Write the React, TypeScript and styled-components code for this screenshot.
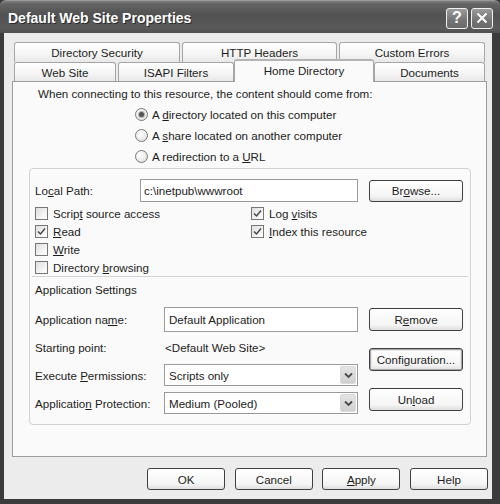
import React from "react";
import styled, { createGlobalStyle } from "styled-components";

const Global = createGlobalStyle`
  html, body { margin: 0; padding: 0; background: #3b3b3b; }
  body {
    font-family: "Liberation Sans", Arial, sans-serif;
    font-size: 11.6px;
    color: #1c1c1c;
  }
  * { box-sizing: border-box; }
`;

const Window = styled.div`
  width: 500px;
  height: 504px;
  display: flex;
  flex-direction: column;
  background: #3b3b3b;
  overflow: hidden;
`;

const TitleBar = styled.div`
  height: 33px;
  flex: none;
  display: flex;
  align-items: center;
  padding: 0 7px 0 8px;
  border-top: 1px solid #9a9a9a;
  border-radius: 6px 6px 0 0;
  background: linear-gradient(#7e7e7e 0, #636363 3px, #525252 14px, #5a5a5a 27px, #4d4d4d 33px);
`;

const Title = styled.div`
  flex: 1;
  color: #fff;
  font-size: 14px;
  font-weight: bold;
  text-shadow: 1px 1px 0 #2a2a2a;
  padding-top: 1px;
`;

const CaptionButtons = styled.div`
  display: flex;
  gap: 3px;
  margin-top: 2px;
`;

const CaptionButton = styled.div`
  width: 22px;
  height: 21px;
  border: 1px solid #f0f0f0;
  border-radius: 3px;
  background: linear-gradient(#9a9a9a, #747474 60%, #6a6a6a);
  display: flex;
  align-items: center;
  justify-content: center;
  color: #fff;
  font-weight: bold;
  font-size: 16px;
`;

const Frame = styled.div`
  flex: 1;
  display: flex;
  padding: 0 8px 5px 4px;
  background: #3b3b3b;
`;

const Body = styled.div`
  flex: 1;
  display: flex;
  flex-direction: column;
  background: #ececec;
  padding: 9px 5px 9px 8px;
`;

const TabRow = styled.div<{ $h: number }>`
  display: flex;
  gap: 2px;
  padding-left: 2px;
  height: ${(p) => p.$h}px;
  align-items: flex-end;
`;

const Tab = styled.div<{ $w: number; $h: number; $selected?: boolean }>`
  width: ${(p) => p.$w}px;
  height: ${(p) => p.$h}px;
  border: 1px solid #a6a6a6;
  border-bottom: none;
  border-radius: 3px 3px 0 0;
  display: flex;
  align-items: center;
  justify-content: center;
  background: linear-gradient(#ffffff, #f6f6f6 55%, #e8e8e8);
  white-space: nowrap;
  ${(p) =>
    p.$selected &&
    `
    position: relative;
    z-index: 2;
    margin: 0 -2px -1px -2px;
    background: #fafafa;
    border-top: 2px solid #b4b4b4;
    padding-bottom: 2px;
  `}
`;

const Panel = styled.div`
  position: relative;
  z-index: 1;
  height: 376px;
  border: 1px solid #9c9c9c;
  background: #fafafa;
  display: flex;
  flex-direction: column;
`;

const Intro = styled.div`
  margin-top: 5px;
  height: 14px;
  line-height: 14px;
  padding-left: 25px;
`;

const RadioGroup = styled.div`
  margin-top: 3px;
  padding-left: 122px;
  display: flex;
  flex-direction: column;
`;

const OptionRow = styled.div<{ $h: number }>`
  height: ${(p) => p.$h}px;
  display: flex;
  align-items: center;
  white-space: nowrap;
`;

const RadioCircle = styled.span<{ $checked?: boolean }>`
  width: 13px;
  height: 13px;
  border-radius: 50%;
  border: 1px solid #787878;
  background: radial-gradient(circle at 35% 35%, #ffffff, #e6e6e6 70%, #d8d8d8);
  margin-right: 4px;
  display: flex;
  align-items: center;
  justify-content: center;
  flex: none;
  &::after {
    content: "";
    display: ${(p) => (p.$checked ? "block" : "none")};
    width: 5px;
    height: 5px;
    border-radius: 50%;
    background: #555;
    box-shadow: 0 0 0 1px #b0b0b0;
  }
`;

const CheckBox = styled.span`
  width: 13px;
  height: 13px;
  border: 1px solid #767676;
  background: linear-gradient(135deg, #dedede, #f6f6f6 70%, #ffffff);
  margin-right: 5px;
  flex: none;
  display: flex;
  align-items: center;
  justify-content: center;
`;

const U = styled.span`
  text-decoration: underline;
  text-underline-offset: 1px;
`;

const GroupBox = styled.div`
  margin: 1px 0 0 16px;
  width: 442px;
  border: 1px solid #d2d2d2;
  border-radius: 4px;
  padding: 0 0 7px 5px;
  display: flex;
  flex-direction: column;
`;

const PathRow = styled.div`
  margin-top: 10px;
  height: 23px;
  display: flex;
  align-items: center;
`;

const Label = styled.div<{ $w: number }>`
  width: ${(p) => p.$w}px;
  flex: none;
  white-space: nowrap;
`;

const TextField = styled.div<{ $w: number; $h: number }>`
  width: ${(p) => p.$w}px;
  height: ${(p) => p.$h}px;
  flex: none;
  border: 1px solid #9a9a9a;
  background: #fff;
  display: flex;
  align-items: center;
  padding-left: 3px;
  white-space: nowrap;
  overflow: hidden;
`;

const Button = styled.div<{ $w: number; $h: number; $focus?: boolean }>`
  width: ${(p) => p.$w}px;
  height: ${(p) => p.$h}px;
  flex: none;
  border: 1px solid #404040;
  border-radius: 3px;
  background: linear-gradient(#ffffff, #f5f5f5 75%, #dedede);
  display: flex;
  align-items: center;
  justify-content: center;
  white-space: nowrap;
  ${(p) => p.$focus && `box-shadow: inset 0 0 0 1px #a8a8a8, inset 0 0 0 2px #e6e6e6;`}
`;

const CheckGrid = styled.div`
  margin-top: 2px;
  display: grid;
  grid-template-columns: 216px 1fr;
  grid-auto-rows: 18px;
`;

const Separator = styled.div`
  height: 1px;
  background: #d4d4d4;
  margin: 0 2px 0 -3px;
`;

const SectionTitle = styled.div`
  margin-top: 3px;
  height: 18px;
  display: flex;
  align-items: center;
`;

const AppSection = styled.div`
  margin-top: 7px;
  display: flex;
  gap: 11px;
`;

const AppFields = styled.div`
  display: grid;
  grid-template-columns: 129px 194px;
  grid-auto-rows: 28px;
  align-items: center;
`;

const AppButtons = styled.div`
  padding-top: 3px;
  display: flex;
  flex-direction: column;
  gap: 17px;
`;

const PlainValue = styled.div`
  padding-left: 1px;
  white-space: nowrap;
`;

const SelectBox = styled.div`
  height: 22px;
  border: 1px solid #9a9a9a;
  background: #fff;
  display: flex;
  align-items: center;
  padding: 1px;
`;

const SelectText = styled.div`
  flex: 1;
  padding-left: 3px;
`;

const SelectArrow = styled.div`
  width: 16px;
  height: 18px;
  border-radius: 2px;
  background: linear-gradient(#e4e4e4, #d0d0d0);
  border: 1px solid #dadada;
  display: flex;
  align-items: center;
  justify-content: center;
`;

const ButtonBar = styled.div`
  margin-top: 11px;
  margin-right: -1px;
  display: flex;
  justify-content: flex-end;
  gap: 9.6px;
`;

const Check = () => (
  <svg width="9" height="9" viewBox="0 0 9 9">
    <path d="M1 4.5 L3.5 7 L8 1.5" fill="none" stroke="#444" strokeWidth="1.4" />
  </svg>
);

const Chevron = () => (
  <svg width="9" height="7" viewBox="0 0 9 7">
    <path d="M1 1.5 L4.5 5 L8 1.5" fill="none" stroke="#4a4a4a" strokeWidth="1.8" />
  </svg>
);

const CheckItem = ({ checked, children }: { checked?: boolean; children: React.ReactNode }) => (
  <OptionRow $h={18}>
    <CheckBox>{checked && <Check />}</CheckBox>
    <span>{children}</span>
  </OptionRow>
);

const RadioItem = ({ checked, children }: { checked?: boolean; children: React.ReactNode }) => (
  <OptionRow $h={21}>
    <RadioCircle $checked={checked} />
    <span>{children}</span>
  </OptionRow>
);

export default function App() {
  return (
    <>
      <Global />
      <Window>
        <TitleBar>
          <Title>Default Web Site Properties</Title>
          <CaptionButtons>
            <CaptionButton>?</CaptionButton>
            <CaptionButton>
              <svg width="12" height="12" viewBox="0 0 12 12">
                <path d="M1.5 1.5 L10.5 10.5 M10.5 1.5 L1.5 10.5" stroke="#fff" strokeWidth="2" />
              </svg>
            </CaptionButton>
          </CaptionButtons>
        </TitleBar>
        <Frame>
          <Body>
            <TabRow $h={20}>
              <Tab $w={166} $h={20}>Directory Security</Tab>
              <Tab $w={155} $h={20}>HTTP Headers</Tab>
              <Tab $w={146} $h={20}>Custom Errors</Tab>
            </TabRow>
            <TabRow $h={19}>
              <Tab $w={102} $h={19}>Web Site</Tab>
              <Tab $w={116} $h={19}>ISAPI Filters</Tab>
              <Tab $w={140} $h={23} $selected>Home Directory</Tab>
              <Tab $w={111} $h={19}>Documents</Tab>
            </TabRow>
            <Panel>
              <Intro>When connecting to this resource, the content should come from:</Intro>
              <RadioGroup>
                <RadioItem checked>
                  A <U>d</U>irectory located on this computer
                </RadioItem>
                <RadioItem>
                  A <U>s</U>hare located on another computer
                </RadioItem>
                <RadioItem>
                  A redirection to a <U>U</U>RL
                </RadioItem>
              </RadioGroup>
              <GroupBox>
                <PathRow>
                  <Label $w={105}>
                    Lo<U>c</U>al Path:
                  </Label>
                  <TextField $w={218} $h={23}>c:\inetpub\wwwroot</TextField>
                  <Button $w={94} $h={22} style={{ marginLeft: 11 }}>
                    Br<U>o</U>wse...
                  </Button>
                </PathRow>
                <CheckGrid>
                  <CheckItem>
                    Scrip<U>t</U> source access
                  </CheckItem>
                  <CheckItem checked>
                    Log <U>v</U>isits
                  </CheckItem>
                  <CheckItem checked>
                    <U>R</U>ead
                  </CheckItem>
                  <CheckItem checked>
                    <U>I</U>ndex this resource
                  </CheckItem>
                  <CheckItem>
                    <U>W</U>rite
                  </CheckItem>
                  <div />
                  <CheckItem>
                    Directory <U>b</U>rowsing
                  </CheckItem>
                  <div />
                </CheckGrid>
                <Separator />
                <SectionTitle>Application Settings</SectionTitle>
                <AppSection>
                  <AppFields>
                    <Label $w={129}>
                      Application na<U>m</U>e:
                    </Label>
                    <TextField $w={194} $h={25} style={{ paddingLeft: 4 }}>
                      Default Application
                    </TextField>
                    <Label $w={129}>Starting point:</Label>
                    <PlainValue>&lt;Default Web Site&gt;</PlainValue>
                    <Label $w={129}>
                      Execute <U>P</U>ermissions:
                    </Label>
                    <SelectBox>
                      <SelectText>Scripts only</SelectText>
                      <SelectArrow>
                        <Chevron />
                      </SelectArrow>
                    </SelectBox>
                    <Label $w={129}>
                      Applicatio<U>n</U> Protection:
                    </Label>
                    <SelectBox>
                      <SelectText>Medium (Pooled)</SelectText>
                      <SelectArrow>
                        <Chevron />
                      </SelectArrow>
                    </SelectBox>
                  </AppFields>
                  <AppButtons>
                    <Button $w={94} $h={23}>
                      R<U>e</U>move
                    </Button>
                    <Button $w={94} $h={23} $focus>
                      Confi<U>g</U>uration...
                    </Button>
                    <Button $w={94} $h={23}>
                      Un<U>l</U>oad
                    </Button>
                  </AppButtons>
                </AppSection>
              </GroupBox>
            </Panel>
            <ButtonBar>
              <Button $w={78} $h={22}>OK</Button>
              <Button $w={78} $h={22}>Cancel</Button>
              <Button $w={78} $h={22}>
                <U>A</U>pply
              </Button>
              <Button $w={78} $h={22}>Help</Button>
            </ButtonBar>
          </Body>
        </Frame>
      </Window>
    </>
  );
}
